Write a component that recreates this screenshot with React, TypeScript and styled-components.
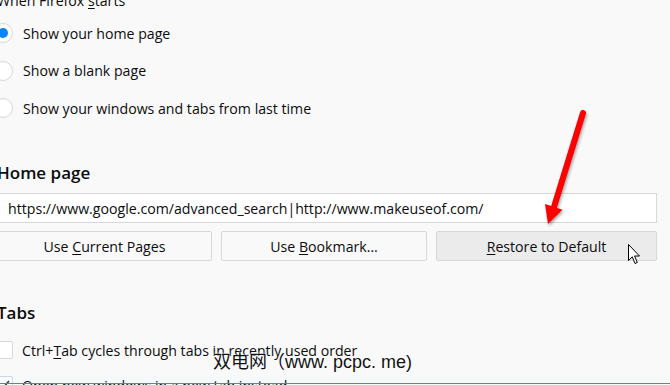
import React from "react";
import styled, { createGlobalStyle } from "styled-components";

const GlobalStyle = createGlobalStyle`
  html, body {
    margin: 0;
    padding: 0;
    background: #f9f9fa;
    overflow: hidden;
  }
  body {
    font-family: "Open Sans", "Noto Sans", sans-serif;
    color: #0c0c0d;
  }
`;

const Frame = styled.div`
  position: relative;
  width: 670px;
  height: 385px;
  overflow: hidden;
  background: #f9f9fa;
`;

const Pane = styled.div`
  width: 660px;
  margin-left: -3px;
  display: flex;
  flex-direction: column;
  font-size: 14.15px;
`;

const Caption = styled.div`
  margin-top: -9px;
  line-height: 20px;
`;

const AccessKey = styled.span`
  text-decoration: underline;
  text-underline-offset: 2px;
`;

const RadioRow = styled.label<{ $first?: boolean }>`
  display: flex;
  align-items: center;
  gap: 10px;
  height: 37.5px;
  margin-top: ${(p) => (p.$first ? "3.5px" : "0")};
`;

const RadioDot = styled.span<{ $checked?: boolean }>`
  box-sizing: border-box;
  width: 20px;
  height: 20px;
  margin-left: -4px;
  border-radius: 50%;
  border: 1px solid #d7d7db;
  background: #fff;
  display: flex;
  align-items: center;
  justify-content: center;
  flex-shrink: 0;

  &::after {
    content: "";
    display: ${(p) => (p.$checked ? "block" : "none")};
    width: 10px;
    height: 10px;
    border-radius: 50%;
    background: #0a84ff;
  }
`;

const Heading = styled.h2<{ $gap: number }>`
  margin: ${(p) => p.$gap}px 0 0;
  font-size: 17px;
  font-weight: 600;
  line-height: 24px;
`;

const UrlField = styled.div`
  box-sizing: border-box;
  margin-top: 8px;
  height: 30px;
  border: 1px solid #d7d7db;
  background: #fff;
  padding: 0 10px;
  display: flex;
  align-items: center;
  white-space: nowrap;
`;

const ButtonRow = styled.div`
  margin-top: 8px;
  display: grid;
  grid-template-columns: 215px 206px 221px;
  gap: 9px;
`;

const Button = styled.button<{ $hover?: boolean }>`
  box-sizing: border-box;
  height: 30px;
  border: 1px solid #d7d7db;
  border-radius: 2px;
  background: ${(p) => (p.$hover ? "#ebebeb" : "#f9f9fa")};
  font-family: inherit;
  font-size: 14.15px;
  color: #0c0c0d;
  padding: 0;
`;

const CheckRow = styled.label<{ $gap: number }>`
  display: flex;
  align-items: center;
  gap: 9px;
  height: 24px;
  margin-top: ${(p) => p.$gap}px;
  white-space: nowrap;
`;

const CheckBox = styled.span`
  box-sizing: border-box;
  width: 18px;
  height: 18px;
  margin-left: -2px;
  border: 1px solid #d7d7db;
  border-radius: 2px;
  background: #fff;
  display: flex;
  align-items: center;
  justify-content: center;
  flex-shrink: 0;
`;

const FocusLine = styled.div`
  position: absolute;
  left: 0;
  right: 0;
  top: 383px;
  height: 1px;
  background: #0a9dff;
`;

const Overlay = styled.svg`
  position: absolute;
  overflow: visible;
`;

const Watermark = styled.div`
  position: absolute;
  left: 213px;
  top: 347px;
  font-family: "Liberation Sans", "Noto Sans CJK SC", sans-serif;
  font-size: 18px;
  color: #111;
  white-space: nowrap;
  text-shadow: 0 0 2px #fff, 0 0 2px #fff;
`;

const App: React.FC = () => {
  return (
    <Frame>
      <GlobalStyle />
      <Pane>
        <Caption>
          When Firefox <AccessKey>s</AccessKey>tarts
        </Caption>
        <RadioRow $first>
          <RadioDot $checked />
          <span>Show your home page</span>
        </RadioRow>
        <RadioRow>
          <RadioDot />
          <span>Show a blank page</span>
        </RadioRow>
        <RadioRow>
          <RadioDot />
          <span>Show your windows and tabs from last time</span>
        </RadioRow>

        <Heading $gap={34}>Home page</Heading>
        <UrlField>https://www.google.com/advanced_search|http://www.makeuseof.com/</UrlField>
        <ButtonRow>
          <Button>
            Use <AccessKey>C</AccessKey>urrent Pages
          </Button>
          <Button>
            Use <AccessKey>B</AccessKey>ookmark…
          </Button>
          <Button $hover>
            <AccessKey>R</AccessKey>estore to Default
          </Button>
        </ButtonRow>

        <Heading $gap={40}>Tabs</Heading>
        <CheckRow $gap={13}>
          <CheckBox />
          <span>
            Ctrl+<AccessKey>T</AccessKey>ab cycles through tabs in recently used order
          </span>
        </CheckRow>
        <CheckRow $gap={11}>
          <CheckBox>
            <svg width="12" height="10" viewBox="0 0 12 10">
              <path d="M1 5 L4.5 8.5 L11 1" fill="none" stroke="#38383d" strokeWidth="1.6" />
            </svg>
          </CheckBox>
          <span>Open new windows in a new tab instead</span>
        </CheckRow>
      </Pane>

      <FocusLine />

      <Overlay style={{ left: 530, top: 100 }} width="60" height="130" viewBox="0 0 60 130">
        <g style={{ filter: "drop-shadow(1px 2px 1.5px rgba(0,0,0,0.35))" }}>
          <line x1="53" y1="13" x2="24" y2="107" stroke="#ff0000" strokeWidth="6" strokeLinecap="round" />
          <polygon points="18,124 32.5,109.7 15,104" fill="#ff0000" />
        </g>
      </Overlay>

      <Overlay style={{ left: 628, top: 244 }} width="13" height="21" viewBox="0 0 13 21">
        <path d="M0.5 0.5 L0.5 16.5 L4.3 12.8 L7 19.5 L9.3 18.5 L6.6 12 L11.5 12 Z" fill="#fff" stroke="#000" strokeWidth="1" strokeLinejoin="round" />
      </Overlay>

      <Watermark>双电网（www. pcpc. me)</Watermark>
    </Frame>
  );
};

export default App;
